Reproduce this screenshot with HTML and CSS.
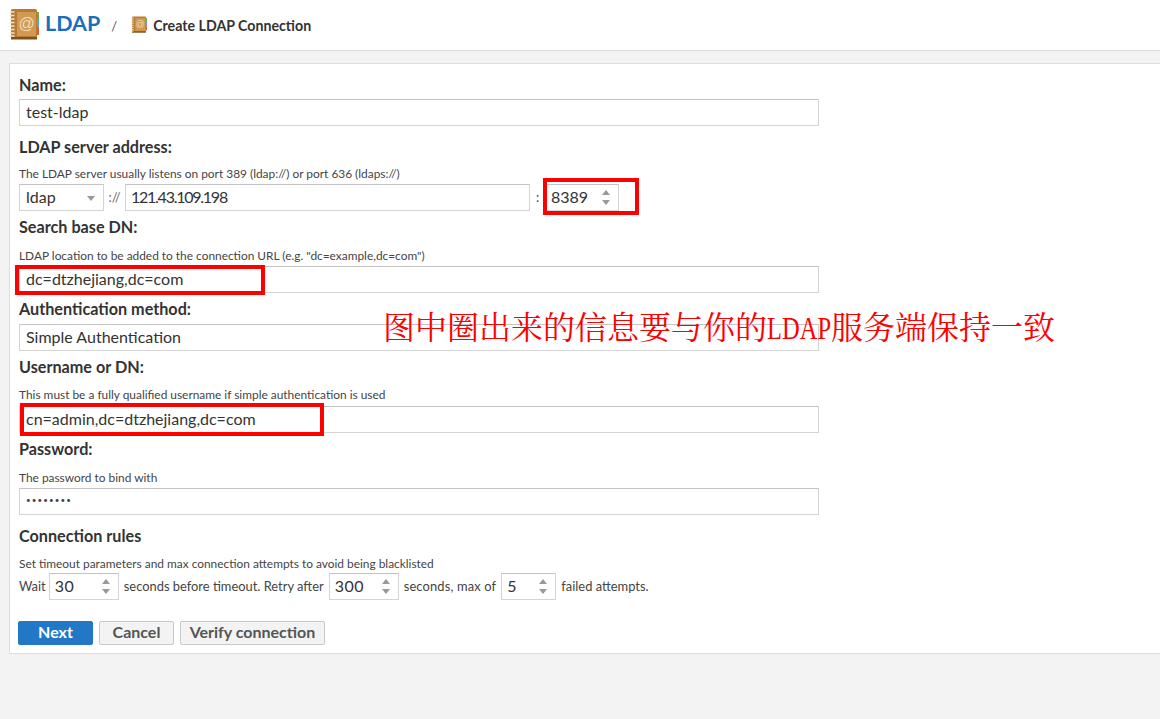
FILE: index.html
```html
<!DOCTYPE html>
<html lang="en">
<head>
<meta charset="utf-8">
<title>Create LDAP Connection</title>
<link rel="stylesheet" href="styles.css">
</head>
<body>
<svg class="defs" width="0" height="0" aria-hidden="true">
  <defs>
    <symbol id="book" viewBox="0 0 30 32">
      <rect x="27" y="4" width="3" height="7" fill="#6fa83c"/>
      <rect x="27" y="11" width="3" height="8" fill="#5a9fdc"/>
      <rect x="27" y="19" width="3" height="8" fill="#d9622b"/>
      <rect x="2" y="1" width="26" height="29" rx="1.500" fill="#b97a30"/>
      <rect x="8" y="4" width="19" height="24" fill="#d09a52"/>
      <rect x="2" y="29" width="26" height="2.500" fill="#7a5420"/>
      <path fill="none" stroke="#ece6d8" stroke-width="1.300" d="M0.500 4h5M0.500 7.500h5M0.500 11h5M0.500 14.500h5M0.500 18h5M0.500 21.500h5M0.500 25h5M0.500 28h5"/>
      <text x="17.500" y="21" text-anchor="middle" font-family="Liberation Sans, sans-serif" font-size="16" fill="#f0dcb8">@</text>
    </symbol>
  </defs>
</svg>

<header class="topbar">
  <svg class="logo" aria-hidden="true"><use href="#book"/></svg>
  <span class="title">LDAP</span>
  <span class="slash">/</span>
  <svg class="crumb-icon" aria-hidden="true"><use href="#book"/></svg>
  <span class="crumb">Create LDAP Connection</span>
</header>

<main class="panel">
  <form class="form">
    <div class="field name-field">
      <label class="label">Name:</label>
      <div class="input wide">test-ldap</div>
    </div>

    <div class="field addr">
      <label class="label">LDAP server address:</label>
      <p class="hint h11">The LDAP server usually listens on port 389 (ldap://) or port 636 (ldaps://)</p>
      <div class="row">
        <div class="input proto">ldap<span class="caret"></span></div>
        <span class="sep">://</span>
        <div class="input host">121.43.109.198</div>
        <span class="colon">:</span>
        <div class="input port">8389<span class="spin"><i class="up"></i><i class="down"></i></span></div>
      </div>
    </div>

    <div class="field">
      <label class="label">Search base DN:</label>
      <p class="hint h13">LDAP location to be added to the connection URL (e.g. "dc=example,dc=com")</p>
      <div class="input wide">dc=dtzhejiang,dc=com</div>
    </div>

    <div class="field plain">
      <label class="label">Authentication method:</label>
      <div class="input wide">Simple Authentication</div>
    </div>

    <div class="field">
      <label class="label">Username or DN:</label>
      <p class="hint h12">This must be a fully qualified username if simple authentication is used</p>
      <div class="input wide gap5">cn=admin,dc=dtzhejiang,dc=com</div>
    </div>

    <div class="field">
      <label class="label">Password:</label>
      <p class="hint h13">The password to bind with</p>
      <div class="input wide dots">••••••••</div>
    </div>

    <div class="field rules">
      <label class="label">Connection rules</label>
      <p class="hint h12">Set timeout parameters and max connection attempts to avoid being blacklisted</p>
      <div class="row rules-row">
        <span class="wait">Wait</span>
        <div class="input num n70">30<span class="spin"><i class="up"></i><i class="down"></i></span></div>
        <span>seconds before timeout. Retry after</span>
        <div class="input num n70">300<span class="spin"><i class="up"></i><i class="down"></i></span></div>
        <span class="max">seconds, max of</span>
        <div class="input num n55">5<span class="spin"><i class="up"></i><i class="down"></i></span></div>
        <span>failed attempts.</span>
      </div>
    </div>

    <div class="buttons">
      <button type="button" class="btn primary">Next</button>
      <button type="button" class="btn cancel">Cancel</button>
      <button type="button" class="btn verify">Verify connection</button>
    </div>
  </form>
</main>

<div class="mark mark-port"></div>
<div class="mark mark-dn"></div>
<div class="mark mark-user"></div>
<div class="note">图中圈出来的信息要与你的<span class="note-latin">LDAP</span>服务端保持一致</div>
</body>
</html>
```
FILE: styles.css
```css
* { box-sizing: border-box; }
html, body { margin: 0; height: 100%; }
body {
  background: #f3f3f3;
  font-family: Lato, "Open Sans", sans-serif;
  color: #333;
  height: 719px;
  overflow: hidden;
  position: relative;
}
.defs { position: absolute; }
.topbar {
  height: 51px;
  background: #fff;
  border-bottom: 1px solid #ddd;
  display: flex;
  align-items: center;
  padding: 0 0 3px 9px;
}
.logo { width: 30px; height: 32px; }
.title { margin-left: 6px; font-size: 21.500px; font-weight: 700; color: #1a6fbd; position: relative; top: -1px; }
.slash { margin-left: 11px; font-size: 13px; color: #555; position: relative; top: 2px; }
.crumb-icon { width: 16px; height: 17px; margin-left: 14px; position: relative; top: 1px; }
.crumb { margin-left: 6px; font-size: 14.200px; font-weight: 700; color: #333; position: relative; top: 2px; }
.panel {
  margin: 12px 0 0 9px;
  height: 591px;
  background: #fff;
  border: 1px solid #ddd;
  border-right: 0;
  padding: 12px 0 0 9px;
}
.form { width: 800px; }
.field { margin: 7px 0 0; }
.label { display: block; font-size: 16.200px; line-height: 18px; font-weight: 700; color: #333; }
.hint { font-size: 11.900px; line-height: 13px; color: #444; }
.h11 { margin: 11px 0 0; }
.h12 { margin: 12px 0 0; }
.h13 { margin: 13px 0 0; }
.input {
  height: 27px;
  border: 1px solid #d4d4d4;
  border-top-color: #c4c4c4;
  background: #fff;
  font-size: 16px;
  line-height: 23px;
  padding: 0 6px;
  color: #333;
  white-space: nowrap;
}
.wide { width: 800px; }
.hint + .input, .hint + .row { margin-top: 4px; }
.hint + .gap5 { margin-top: 5px; }
.name-field { margin-top: 0; }
.name-field .input { margin-top: 5px; }
.addr { margin-top: 12px; }
.plain .input { margin-top: 6px; }
.row { display: flex; align-items: center; width: 800px; font-size: 12.900px; color: #444; }
.row > span { margin-top: -2px; }
.proto { width: 85px; position: relative; }
.caret {
  position: absolute; right: 8px; top: 11px;
  border-left: 4px solid transparent;
  border-right: 4px solid transparent;
  border-top: 5px solid #999;
}
.sep { width: 21px; text-align: center; color: #666; }
.host { width: 405px; padding-left: 5px; letter-spacing: -1.250px; }
.colon { width: 15px; text-align: center; }
.port { width: 74px; padding-left: 5px; position: relative; }
.spin { position: absolute; top: 5px; right: 7px; width: 9px; height: 15px; }
.spin i { position: absolute; left: 0; border-left: 4.500px solid transparent; border-right: 4.500px solid transparent; }
.spin .up { top: 0; border-bottom: 5px solid #999; }
.spin .down { bottom: 0; border-top: 5px solid #999; }
.dots { font-size: 8px; letter-spacing: 1.100px; color: #444; }
.rules { margin-top: 12px; }
.hint + .rules-row { margin-top: 3px; }
.rules-row { width: auto; gap: 5px; }
.wait { margin-right: -2px; }
.max { letter-spacing: 0.150px; }
.num { position: relative; font-size: 16px; padding-left: 5px; letter-spacing: 0.500px; }
.n70 { width: 70px; }
.n55 { width: 55px; }
.buttons { display: flex; gap: 6px; margin-top: 21px; margin-left: -1px; }
.btn {
  height: 24px;
  border: 1px solid #c8c8c8;
  border-radius: 2px;
  background: #f3f3f3;
  font: 700 16px/20px Lato, "Open Sans", sans-serif;
  color: #555;
  padding: 0 0 2px;
}
.primary { width: 75px; background: #2277c6; border-color: #2277c6; color: #fff; }
.cancel { width: 75px; }
.verify { width: 145px; }
.mark { position: absolute; border: 4px solid #f00; }
.mark-port { left: 543px; top: 178px; width: 96px; height: 37px; }
.mark-dn { left: 15px; top: 265px; width: 250px; height: 30px; }
.mark-user { left: 20px; top: 403px; width: 304px; height: 33px; }
.note {
  position: absolute;
  left: 383px;
  top: 307px;
  font-family: "Noto Serif CJK SC", "Liberation Serif", "Noto Sans CJK SC", serif;
  font-size: 32px;
  line-height: 36px;
  color: #f00;
  white-space: nowrap;
}
.note-latin {
  display: inline-block;
  width: 64px;
  font-family: "Liberation Serif", serif;
  transform: scaleX(0.766);
  transform-origin: left;
}
```
